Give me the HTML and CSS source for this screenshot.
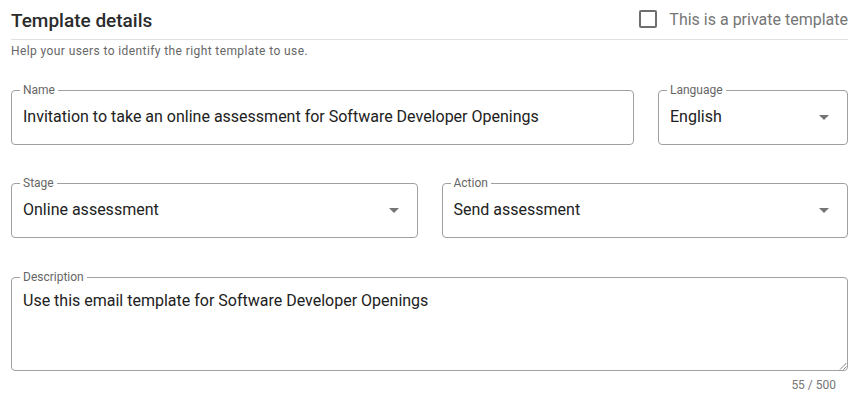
FILE: index.html
```html
<!doctype html>
<html lang="en">
 <head>
  <meta charset="UTF-8">
  <title>Template details</title>
  <link rel="stylesheet" href="styles.css">
 </head>
 <body>
  <div class="panel">
   <div class="header">
    <h2 class="title">Template details</h2>
    <label class="private">
     <span class="checkbox"></span>
     <span>This is a private template</span>
    </label>
   </div>
   <p class="hint">Help your users to identify the right template to use.</p>

   <div class="row row-name">
    <fieldset class="field">
     <legend>Name</legend>
     <div class="value">Invitation to take an online assessment for Software Developer Openings</div>
    </fieldset>
    <fieldset class="field select">
     <legend>Language</legend>
     <div class="value">English <span class="arrow"></span></div>
    </fieldset>
   </div>

   <div class="row row-half">
    <fieldset class="field select">
     <legend>Stage</legend>
     <div class="value">Online assessment <span class="arrow"></span></div>
    </fieldset>
    <fieldset class="field select">
     <legend>Action</legend>
     <div class="value">Send assessment <span class="arrow"></span></div>
    </fieldset>
   </div>

   <fieldset class="field area">
    <legend>Description</legend>
    <div class="value">Use this email template for Software Developer Openings</div>
    <svg class="grip" width="8" height="8" viewBox="0 0 8 8">
     <path d="M7.5 1 L1 7.5 M7.5 4.5 L4.5 7.5" stroke="#888" stroke-width="1" fill="none"/>
    </svg>
   </fieldset>
   <div class="counter">55 / 500</div>
  </div>
 </body>
</html>
```

FILE: styles.css
```css
body {
    margin: 0;
    background: #fff;
    font-family: Roboto, 'Noto Sans', sans-serif;
    color: #212121;
}

.panel {
    width: 837px;
    margin-left: 11px;
}

.header {
    display: flex;
    justify-content: space-between;
    align-items: center;
    height: 40px;
    border-bottom: 1px solid #e0e0e0;
    box-sizing: border-box;
}

.title {
    margin: 0;
    font-size: 19px;
    font-weight: 500;
    line-height: 24px;
    color: #2b2b2b;
    padding-top: 3px;
}

.private {
    display: flex;
    align-items: center;
    gap: 12px;
    font-size: 16px;
    color: #757575;
    padding-bottom: 1px;
}

.checkbox {
    width: 14px;
    height: 14px;
    border: 2px solid #6e6e6e;
    border-radius: 2px;
}

.hint {
    margin: 3px 0 0;
    font-size: 12px;
    line-height: 16px;
    color: #666;
    letter-spacing: 0.4px;
}

.row {
    display: flex;
    gap: 24px;
}

.row-name {
    margin-top: 24px;
}

.row-name .field:first-child {
    flex: 0 0 623px;
}

.row-name .field:last-child {
    flex: 1;
}

.row-half {
    margin-top: 31px;
}

.row-half .field {
    flex: 1;
}

.field {
    margin: 0;
    padding: 0 12px 17px 11px;
    border: 1px solid #a0a0a0;
    border-radius: 4px;
    min-width: 0;
    box-sizing: border-box;
    position: relative;
}

.field legend {
    font-size: 12px;
    line-height: 14px;
    color: #666;
    padding: 0 3px;
    margin-left: -3px;
}

.field .value {
    margin-top: 10px;
    font-size: 16px;
    line-height: 20px;
    white-space: nowrap;
}

.select .value {
    display: flex;
    justify-content: space-between;
    align-items: center;
}

.arrow {
    width: 0;
    height: 0;
    border-left: 5px solid transparent;
    border-right: 5px solid transparent;
    border-top: 5px solid #757575;
    margin-right: 6px;
}

.area {
    margin-top: 32px;
    height: 101px;
    padding-bottom: 0;
}

.area .value {
    margin-top: 7px;
}

.grip {
    position: absolute;
    right: 0;
    bottom: 0;
}

.counter {
    margin-top: 7px;
    text-align: right;
    padding-right: 12px;
    font-size: 12px;
    line-height: 14px;
    color: #757575;
}
```
